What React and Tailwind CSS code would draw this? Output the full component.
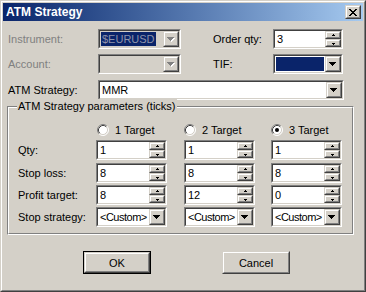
import React from 'react'

const FONT = { fontFamily: '"Liberation Sans", Arial, sans-serif' }

// classic 3d edges
function Sunken({ className = '', inner = 'bg-white', children }) {
  return (
    <div className={`border border-t-[#808080] border-l-[#808080] border-b-white border-r-white ${className}`}>
      <div className={`w-full h-full flex border border-t-[#404040] border-l-[#404040] border-b-[#d4d0c8] border-r-[#d4d0c8] ${inner}`}>
        {children}
      </div>
    </div>
  )
}

function Raised({ className = '', children }) {
  return (
    <div className={`border border-t-[#d4d0c8] border-l-[#d4d0c8] border-b-[#404040] border-r-[#404040] bg-[#d4d0c8] ${className}`}>
      <div className="w-full h-full flex items-center justify-center border border-t-white border-l-white border-b-[#808080] border-r-[#808080]">
        {children}
      </div>
    </div>
  )
}

function Arrow({ disabled }) {
  const c = disabled ? '#808080' : '#000'
  return (
    <svg width="8" height="5" shapeRendering="crispEdges" className="block">
      {disabled && (
        <g fill="#fff">
          <rect x="1" y="1" width="7" height="1" />
          <rect x="2" y="2" width="5" height="1" />
          <rect x="3" y="3" width="3" height="1" />
          <rect x="4" y="4" width="1" height="1" />
        </g>
      )}
      <g fill={c}>
        <rect x="0" y="0" width="7" height="1" />
        <rect x="1" y="1" width="5" height="1" />
        <rect x="2" y="2" width="3" height="1" />
        <rect x="3" y="3" width="1" height="1" />
      </g>
    </svg>
  )
}

function SmallArrow({ up }) {
  return (
    <svg width="5" height="3" shapeRendering="crispEdges" className="block">
      {up ? (
        <g fill="#000">
          <rect x="2" y="0" width="1" height="1" />
          <rect x="1" y="1" width="3" height="1" />
        </g>
      ) : (
        <g fill="#000">
          <rect x="1" y="1" width="3" height="1" />
          <rect x="2" y="2" width="1" height="1" />
        </g>
      )}
    </svg>
  )
}

function Combo({ width, text, disabled, selected, filled, tight }) {
  return (
    <Sunken className={`${width} h-[20px]`} inner={disabled ? 'bg-[#d4d0c8]' : 'bg-white'}>
      <div className="flex-1 flex items-center pl-[1px] min-w-0 overflow-hidden">
        {filled ? (
          <div className="w-full h-[14px] bg-[#0a246a] mr-[1px]" />
        ) : selected ? (
          <span className="bg-[#0a246a] text-[#8d93aa] px-[1px] leading-[14px]">{text}</span>
        ) : (
          <span className={`pl-[1px] leading-[14px] whitespace-nowrap ${tight ? 'tracking-[-0.5px]' : ''}`}>{text}</span>
        )}
      </div>
      <Raised className="w-[16px] h-full">
        <Arrow disabled={disabled} />
      </Raised>
    </Sunken>
  )
}

function Spin({ width, value }) {
  return (
    <Sunken className={`${width} h-[20px]`}>
      <div className="flex-1 flex items-center pl-[2px] leading-[14px]">{value}</div>
      <div className="w-[16px] flex flex-col">
        <Raised className="h-[8px] w-full"><SmallArrow up /></Raised>
        <Raised className="h-[8px] w-full"><SmallArrow /></Raised>
      </div>
    </Sunken>
  )
}

function Radio({ checked }) {
  return (
    <svg width="12" height="12" className="block">
      <circle cx="6" cy="6" r="5" fill="#fff" />
      <path d="M 2.11 9.89 A 5.5 5.5 0 0 1 9.89 2.11" stroke="#808080" fill="none" />
      <path d="M 9.89 2.11 A 5.5 5.5 0 0 1 2.11 9.89" stroke="#fff" fill="none" />
      <path d="M 2.82 9.18 A 4.5 4.5 0 0 1 9.18 2.82" stroke="#404040" fill="none" />
      <path d="M 9.18 2.82 A 4.5 4.5 0 0 1 2.82 9.18" stroke="#d4d0c8" fill="none" />
      {checked && <circle cx="6" cy="6" r="2" fill="#000" />}
    </svg>
  )
}

function RadioLabel({ label, checked, className = '' }) {
  return (
    <div className={`flex items-center h-[12px] ${className}`}>
      <Radio checked={checked} />
      <span className="ml-[6px] leading-[12px]">{label}</span>
    </div>
  )
}

const cols = [
  { qty: '1', stop: '8', profit: '8' },
  { qty: '1', stop: '8', profit: '12' },
  { qty: '1', stop: '8', profit: '0' },
]

function ParamRow({ label, render, className = '' }) {
  return (
    <div className={`flex items-center h-[20px] ${className}`}>
      <span className="w-[78px]">{label}</span>
      <div className="w-[71px]">{render(cols[0])}</div>
      <div className="w-[71px] ml-[17px]">{render(cols[1])}</div>
      <div className="w-[71px] ml-[16px]">{render(cols[2])}</div>
    </div>
  )
}

function PushButton({ label, isDefault }) {
  const btn = (
    <Raised className={isDefault ? 'w-[66px] h-[21px]' : 'w-[68px] h-[23px]'}>
      <span className="leading-[14px]">{label}</span>
    </Raised>
  )
  if (!isDefault) return btn
  return <div className="border border-black">{btn}</div>
}

export default function App() {
  return (
    <div className="w-[366px] h-[292px] bg-white text-[11px] text-black" style={FONT}>
      {/* window frame */}
      <div className="w-full h-full border border-t-[#d4d0c8] border-l-[#d4d0c8] border-b-[#404040] border-r-[#404040]">
        <div className="w-full h-full border border-t-white border-l-white border-b-[#808080] border-r-[#808080] bg-[#d4d0c8] p-[1px] flex flex-col">
          {/* title bar */}
          <div className="h-[18px] flex items-center bg-gradient-to-r from-[#0a246a] to-[#a6caf0] pl-[3px] pr-[2px]">
            <span className="flex-1 text-white font-bold text-[12px] leading-[14px]">ATM Strategy</span>
            <Raised className="w-[16px] h-[14px]">
              <svg width="8" height="7" shapeRendering="crispEdges" className="block">
                <path d="M0 0h2v1h-2zM6 0h2v1h-2zM1 1h2v1h-2zM5 1h2v1h-2zM2 2h4v1h-4zM3 3h2v1h-2zM2 4h4v1h-4zM1 5h2v1h-2zM5 5h2v1h-2zM0 6h2v1h-2zM6 6h2v1h-2z" fill="#000" />
              </svg>
            </Raised>
          </div>

          <div className="pl-[5px] pt-[8px] flex flex-col">
            <div className="flex items-center h-[20px]">
              <span className="w-[90px] text-[#808080]">Instrument:</span>
              <Combo width="w-[83px]" text="$EURUSD" disabled selected />
              <span className="w-[60px] ml-[32px]">Order qty:</span>
              <Spin width="w-[70px]" value="3" />
            </div>
            <div className="flex items-center h-[20px] mt-[5px]">
              <span className="w-[90px] text-[#808080]">Account:</span>
              <Combo width="w-[83px]" text="" disabled />
              <span className="w-[60px] ml-[32px]">TIF:</span>
              <Combo width="w-[70px]" filled />
            </div>
            <div className="flex items-center h-[20px] mt-[6px]">
              <span className="w-[90px]">ATM Strategy:</span>
              <Combo width="w-[246px]" text="MMR" />
            </div>

            {/* group box */}
            <div className="relative mt-[6px] ml-[-1px] w-[347px] h-[129px] border border-t-[#808080] border-l-[#808080] border-b-white border-r-white">
              <div className="w-full h-full border border-t-white border-l-white border-b-[#808080] border-r-[#808080] pl-[9px] pt-[16px]">
                <div className="flex">
                  <div className="w-[78px]" />
                  <RadioLabel label="1 Target" className="w-[71px] pl-[1px]" />
                  <RadioLabel label="2 Target" className="w-[71px] ml-[17px]" />
                  <RadioLabel label="3 Target" checked className="w-[71px] ml-[16px]" />
                </div>
                <ParamRow label="Qty:" className="mt-[4px]" render={(c) => <Spin width="w-[71px]" value={c.qty} />} />
                <ParamRow label="Stop loss:" className="mt-[3px]" render={(c) => <Spin width="w-[71px]" value={c.stop} />} />
                <ParamRow label="Profit target:" className="mt-[2px]" render={(c) => <Spin width="w-[71px]" value={c.profit} />} />
                <ParamRow label="Stop strategy:" className="mt-[2px]" render={() => <Combo width="w-[71px]" text="<Custom>" tight />} />
              </div>
              <span className="absolute left-[9px] top-[-8px] px-[1px] bg-[#d4d0c8] leading-[14px]">ATM Strategy parameters (ticks)</span>
            </div>

            <div className="flex mt-[16px] h-[23px]">
              <div className="ml-[75px]"><PushButton label="OK" isDefault /></div>
              <div className="ml-[71px]"><PushButton label="Cancel" /></div>
            </div>
          </div>
        </div>
      </div>
    </div>
  )
}
